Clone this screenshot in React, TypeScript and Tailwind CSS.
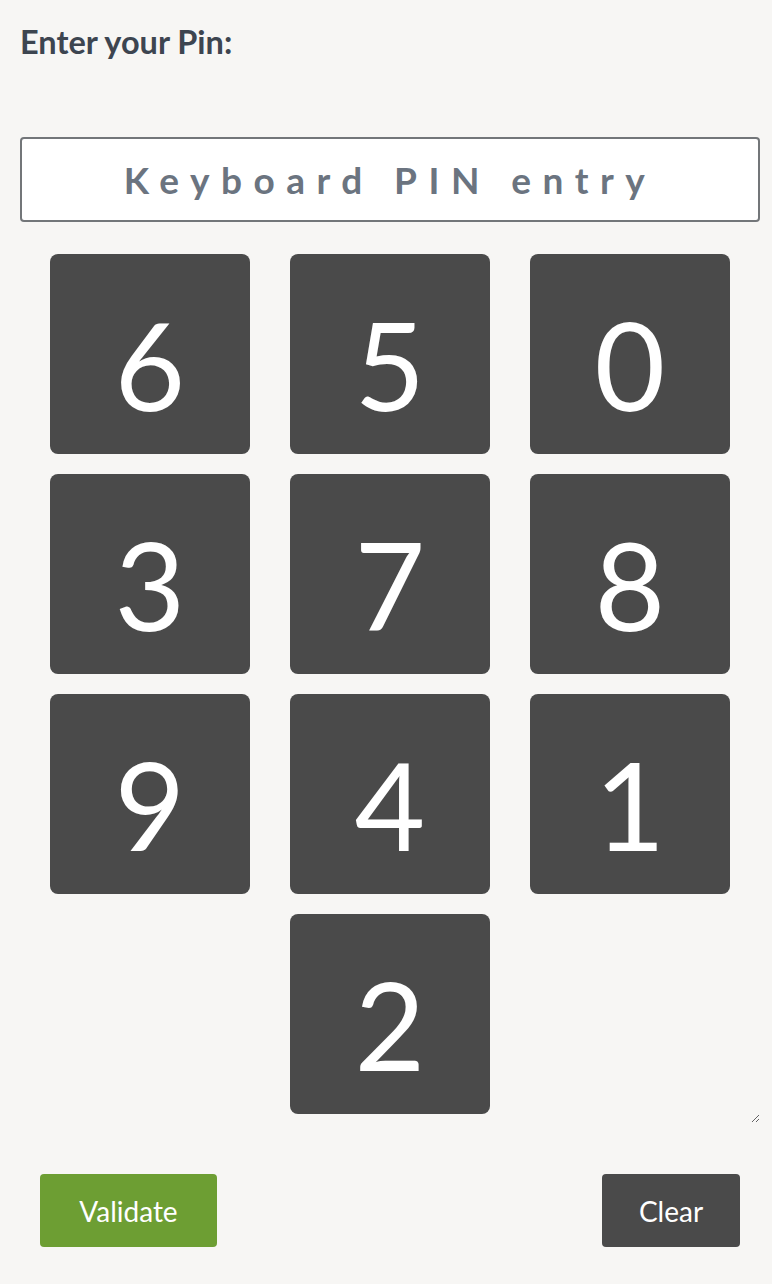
const keys = ['6', '5', '0', '3', '7', '8', '9', '4', '1'];

function Key({ label }: { label: string }) {
  return (
    <button className="flex h-[200px] w-[200px] items-center justify-center rounded-[8px] bg-[#4a4a4a] pt-[20px] text-[122px] font-normal leading-none text-white">
      {label}
    </button>
  );
}

export default function App() {
  return (
    <div className="h-[1284px] w-[772px] overflow-hidden bg-[#f7f6f4] font-['Lato',sans-serif]">
      <div className="px-5 pt-[22px]">
        <h1 className="text-[32.5px] font-bold leading-[40px] text-[#3d4550]">Enter your Pin:</h1>
      </div>

      <div className="ml-5 mr-3 mt-[75px] flex h-[85px] items-center justify-center rounded-[4px] border-2 border-[#737679] bg-white">
        <span className="text-[37px] font-bold tracking-[0.31em] text-[#6b7480]">Keyboard PIN entry</span>
      </div>

      <div className="ml-5 mr-3 mt-[32px] h-[869px] resize overflow-auto">
        <div className="grid grid-cols-[200px_200px_200px] justify-center gap-x-10 gap-y-5">
          {keys.map((k) => (
            <Key key={k} label={k} />
          ))}
          <div />
          <Key label="2" />
        </div>
      </div>

      <div className="mt-[51px] flex items-center justify-between pl-10 pr-8">
        <button className="h-[73px] w-[177px] rounded-[4px] bg-[#6d9e33] text-[28px] font-normal text-white">Validate</button>
        <button className="h-[73px] w-[138px] rounded-[4px] bg-[#4a4a4a] text-[28px] font-normal text-white">Clear</button>
      </div>
    </div>
  );
}
